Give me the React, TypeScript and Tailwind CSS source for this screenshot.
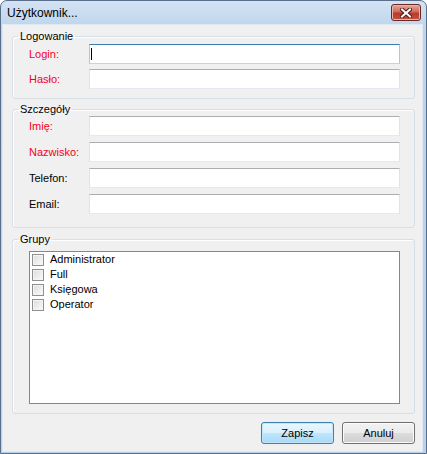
import React from "react";

const font = "font-['Liberation_Sans',Arial,sans-serif]";

const Field = ({ label, red, focused }: { label: string; red?: boolean; focused?: boolean }) => (
  <div className="flex items-center h-[20px]">
    <span className={`w-[60px] text-[11px] leading-[13px] ${red ? "text-[#f5001c]" : "text-black"}`}>{label}</span>
    <div
      className={`flex-1 h-[20px] bg-white border flex items-center ${
        focused
          ? "border-t-[#3d7bad] border-x-[#a4c9e3] border-b-[#b7d9ed]"
          : "border-t-[#abadb3] border-x-[#e2e3ea] border-b-[#e3e9ef]"
      }`}
    >
      {focused && <span className="ml-[1px] w-[1px] h-[12px] bg-black" />}
    </div>
  </div>
);

const GroupBox = ({ title, className, children }: { title: string; className?: string; children: React.ReactNode }) => (
  <fieldset className={`border border-[#d5dfe5] rounded-[3px] pl-[5px] pr-[14px] shadow-[inset_1px_1px_0_#ffffff] ${className ?? ""}`}>
    <legend className="px-[2px] text-[11px] leading-[13px] text-black">{title}</legend>
    <div className="pl-[11px]">{children}</div>
  </fieldset>
);

const CheckItem = ({ label }: { label: string }) => (
  <div className="h-[15px] flex items-center gap-[6px]">
    <span className="w-[12px] h-[12px] border border-[#8e8f8f] bg-[linear-gradient(135deg,#dcdcdc,#fbfbfb)] shadow-[inset_0_0_0_1px_#f4f4f4]" />
    <span className="text-[11px] leading-[13px] text-black">{label}</span>
  </div>
);

export default function App() {
  const groups = ["Administrator", "Full", "Księgowa", "Operator"];

  return (
    <div className={`w-[427px] h-[454px] bg-white ${font}`}>
      <div className="w-full h-full flex flex-col border border-[#5a6f8c] rounded-t-[7px] bg-[linear-gradient(to_bottom,#d3e3f4,#bcd3ea_30px,#b9d1ea)]">
        {/* Title bar */}
        <div className="h-[24px] flex items-start justify-between">
          <span className="pl-[6px] pt-[4px] text-[12px] leading-[17px] text-black">Użytkownik...</span>
          <button className="mt-[3px] mr-[5px] w-[30px] h-[17px] rounded-[3px] border border-[#6a2823] bg-[linear-gradient(to_bottom,#e4a89c,#cf6a5b_45%,#b83a2c_55%,#c4523f)] flex items-center justify-center shadow-[inset_0_0_0_1px_#e9b6ab]">
            <svg width="12" height="10" viewBox="0 0 12 10">
              <path d="M2 1.5 L10 8.5 M10 1.5 L2 8.5" stroke="#4b1c18" strokeWidth="4" strokeLinecap="square" />
              <path d="M2 1.5 L10 8.5 M10 1.5 L2 8.5" stroke="#ffffff" strokeWidth="2" strokeLinecap="square" />
            </svg>
          </button>
        </div>

        {/* Client area */}
        <div className="flex-1 ml-[2px] mr-[4px] mb-[2px] bg-[#f0f0f0] shadow-[0_0_0_1px_#dfe9f4] pl-[9px] pr-[7px] pt-[5px] flex flex-col">
          <GroupBox title="Logowanie" className="pb-[9px]">
            <div className="pt-[1px] flex flex-col gap-[5px]">
              <Field label="Login:" red focused />
              <Field label="Hasło:" red />
            </div>
          </GroupBox>

          <GroupBox title="Szczegóły" className="mt-[4px] pb-[13px]">
            <div className="flex flex-col gap-[6px]">
              <Field label="Imię:" red />
              <Field label="Nazwisko:" red />
              <Field label="Telefon:" />
              <Field label="Email:" />
            </div>
          </GroupBox>

          <GroupBox title="Grupy" className="mt-[5px] pb-[9px]">
            <div className="pt-[5px]">
              <div className="h-[153px] border border-[#828790] bg-white pl-[2px]">
                {groups.map((g) => (
                  <CheckItem key={g} label={g} />
                ))}
              </div>
            </div>
          </GroupBox>

          {/* Buttons */}
          <div className="mt-[8px] flex justify-end gap-[8px]">
            <button className="w-[73px] h-[22px] rounded-[3px] border border-[#3c7fb1] bg-[linear-gradient(to_bottom,#eaf6fd_0%,#d9f0fc_50%,#bee6fd_50%,#a7d9f5_100%)] shadow-[inset_0_0_0_1px_#c5e7fb] text-[11px] text-black">
              Zapisz
            </button>
            <button className="w-[73px] h-[22px] rounded-[3px] border border-[#707070] bg-[linear-gradient(to_bottom,#f2f2f2_0%,#ebebeb_50%,#dddddd_50%,#cfcfcf_100%)] shadow-[inset_0_0_0_1px_#fcfcfc] text-[11px] text-black">
              Anuluj
            </button>
          </div>
        </div>
      </div>
    </div>
  );
}
